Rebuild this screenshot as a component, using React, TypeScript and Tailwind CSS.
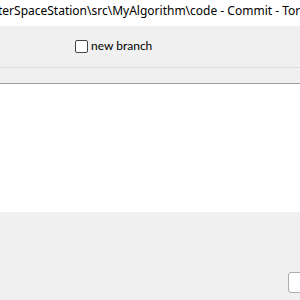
export default function App() {
  const font = { fontFamily: '"Segoe UI", "Noto Sans", "Open Sans", sans-serif' };
  return (
    <div className="w-[300px] h-[300px] overflow-hidden flex flex-col bg-[#f0f0f0]" style={font}>
      <div className="h-[26px] bg-white flex items-center overflow-hidden shrink-0">
        <span className="whitespace-nowrap text-[12px] text-black ml-[-2px] leading-none pb-[5px]">
          terSpaceStation\src\MyAlgorithm\code - Commit - TortoiseGit
        </span>
      </div>
      <div className="h-[41px] shrink-0 flex items-center pl-[75px] pb-[1px]">
        <div className="w-[13px] h-[13px] border border-[#444] rounded-[2px] bg-white" />
        <span className="ml-[3px] text-[12px] text-black leading-none font-['Lato',sans-serif]">new branch</span>
      </div>
      <div className="h-[17px] shrink-0 border-t border-[#dcdcdc] border-b border-b-[#a0a0a0]" />
      <div className="h-[128px] shrink-0 bg-white" />
      <div className="flex-1 relative">
        <div className="absolute left-[288px] top-[60px] w-[40px] h-[21px] bg-white border border-[#adadad] rounded-[3px]" />
      </div>
    </div>
  );
}
